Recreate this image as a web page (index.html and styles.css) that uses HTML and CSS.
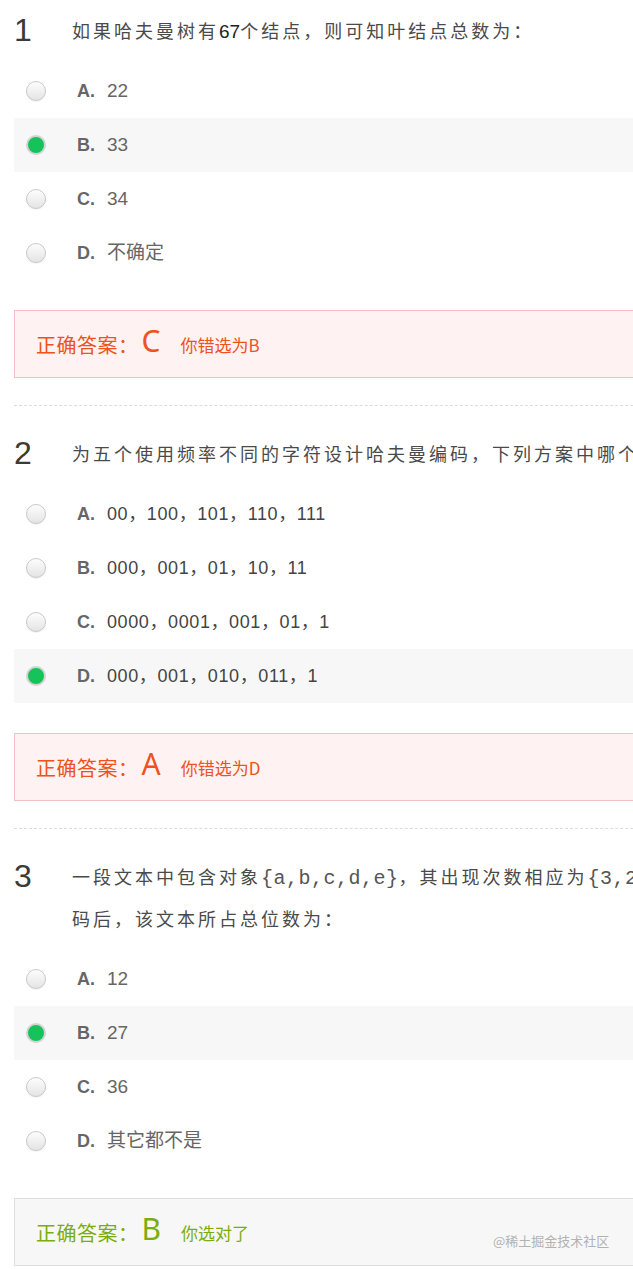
FILE: index.html
```html
<!DOCTYPE html>
<html lang="zh-CN">
<head>
<meta charset="utf-8">
<title>哈夫曼树测验</title>
<link rel="stylesheet" href="styles.css">
</head>
<body>
<div class="page">

  <section class="question first">
    <div class="q-head">
      <div class="q-num">1</div>
      <div class="q-text">如果哈夫曼树有<span class="latin">67</span>个结点，则可知叶结点总数为：</div>
    </div>
    <ul class="options">
      <li class="option"><span class="radio"></span><span class="opt"><b class="opt-label">A.</b>22</span></li>
      <li class="option chosen"><span class="radio on"></span><span class="opt"><b class="opt-label">B.</b>33</span></li>
      <li class="option"><span class="radio"></span><span class="opt"><b class="opt-label">C.</b>34</span></li>
      <li class="option"><span class="radio"></span><span class="opt"><b class="opt-label">D.</b>不确定</span></li>
    </ul>
    <div class="answer wrong">
      <span class="ans-title">正确答案：</span><span class="ans-key">C</span><span class="ans-note">你错选为B</span>
    </div>
  </section>

  <hr class="sep">

  <section class="question">
    <div class="q-head">
      <div class="q-num">2</div>
      <div class="q-text">为五个使用频率不同的字符设计哈夫曼编码，下列方案中哪个可能是所得的哈夫曼编码？</div>
    </div>
    <ul class="options codes">
      <li class="option"><span class="radio"></span><span class="opt"><b class="opt-label">A.</b>00，100，101，110，111</span></li>
      <li class="option"><span class="radio"></span><span class="opt"><b class="opt-label">B.</b>000，001，01，10，11</span></li>
      <li class="option"><span class="radio"></span><span class="opt"><b class="opt-label">C.</b>0000，0001，001，01，1</span></li>
      <li class="option chosen"><span class="radio on"></span><span class="opt"><b class="opt-label">D.</b>000，001，010，011，1</span></li>
    </ul>
    <div class="answer wrong">
      <span class="ans-title">正确答案：</span><span class="ans-key">A</span><span class="ans-note">你错选为D</span>
    </div>
  </section>

  <hr class="sep">

  <section class="question">
    <div class="q-head">
      <div class="q-num">3</div>
      <div class="q-text">一段文本中包含对象<span class="mono">{a,b,c,d,e}</span>，其出现次数相应为<span class="mono">{3,2,4,2,1}</span>，则经过哈夫曼编<br>码后，该文本所占总位数为：</div>
    </div>
    <ul class="options">
      <li class="option"><span class="radio"></span><span class="opt"><b class="opt-label">A.</b>12</span></li>
      <li class="option chosen"><span class="radio on"></span><span class="opt"><b class="opt-label">B.</b>27</span></li>
      <li class="option"><span class="radio"></span><span class="opt"><b class="opt-label">C.</b>36</span></li>
      <li class="option"><span class="radio"></span><span class="opt"><b class="opt-label">D.</b>其它都不是</span></li>
    </ul>
    <div class="answer right">
      <span class="ans-title">正确答案：</span><span class="ans-key">B</span><span class="ans-note">你选对了</span>
      <span class="watermark">@稀土掘金技术社区</span>
    </div>
  </section>

</div>
</body>
</html>
```

FILE: styles.css
```css
html, body {
  margin: 0;
  padding: 0;
  background: #fff;
}
body {
  overflow: hidden;
  font-family: "Liberation Sans", Arial, "Noto Sans CJK SC", sans-serif;
}
.page {
  width: 1000px;
  padding-left: 14px;
}

.question {
  padding-top: 17px;
}
.question.first {
  padding-top: 0;
}

.q-head {
  display: flex;
  padding: 9px 0 13px;
}
.q-num {
  flex: 0 0 58px;
  font-family: "Liberation Sans", Arial, sans-serif;
  font-size: 32px;
  line-height: 42px;
  color: #3a3a3a;
}
.q-text {
  flex: 1;
  font-family: "Noto Sans CJK SC", sans-serif;
  font-size: 18px;
  letter-spacing: 3px;
  line-height: 42px;
  color: #4a4a4a;
}
.q-text .latin {
  font-family: "Liberation Sans", Arial, sans-serif;
  font-size: 19px;
  line-height: 1;
  letter-spacing: 0;
  color: #222;
}
.q-text .mono {
  font-family: "Liberation Mono", "Courier New", monospace;
  font-size: 20px;
  line-height: 1;
  letter-spacing: 0.5px;
  color: #555;
}

.options {
  list-style: none;
  margin: 0;
  padding: 0;
}
.option {
  display: flex;
  align-items: center;
  height: 54px;
  padding-left: 12px;
}
.option.chosen {
  background: #f7f7f7;
}
.radio {
  box-sizing: border-box;
  flex: 0 0 20px;
  height: 20px;
  border-radius: 50%;
  border: 1px solid #c9c9c9;
  background: linear-gradient(#fdfdfd, #e4e4e4);
  box-shadow: 0 1px 1px rgba(0, 0, 0, 0.06);
}
.radio.on {
  border: 2px solid #d3d3d3;
  background: #16c35a;
  box-shadow: none;
}
.opt {
  margin-left: 31px;
  font-family: "Liberation Sans", Arial, "Noto Sans CJK SC", sans-serif;
  font-size: 19px;
  line-height: 24px;
  color: #666;
}
.opt-label {
  display: inline-block;
  width: 30px;
  font-size: 18px;
  font-weight: bold;
  color: #666;
}
.codes .opt {
  color: #444;
  font-size: 18px;
  letter-spacing: 0.6px;
}
.codes .opt-label {
  letter-spacing: 0;
  color: #666;
}

.answer {
  position: relative;
  box-sizing: border-box;
  height: 68px;
  margin-top: 30px;
  padding-left: 21px;
  display: flex;
  align-items: center;
  font-family: "Noto Sans CJK SC", sans-serif;
}
.answer.wrong {
  background: #fff2f2;
  border: 1px solid #f4c2c4;
  color: #ef5120;
}
.answer.right {
  background: #f7f7f7;
  border: 1px solid #dedede;
  color: #7aae0c;
}
.ans-title {
  font-size: 20px;
  letter-spacing: 0.5px;
}
.ans-key {
  font-family: "Noto Sans", "Liberation Sans", sans-serif;
  font-size: 30px;
  line-height: 1;
  margin-left: 3px;
  margin-right: 20px;
  position: relative;
  top: -3px;
}
.ans-note {
  font-size: 17px;
}
.watermark {
  position: absolute;
  left: 478px;
  top: 32px;
  font-size: 13px;
  color: #b2b2b2;
}

.sep {
  margin: 27px 0 0;
  border: 0;
  border-top: 1px dashed #dcdcdc;
  height: 0;
}
```
